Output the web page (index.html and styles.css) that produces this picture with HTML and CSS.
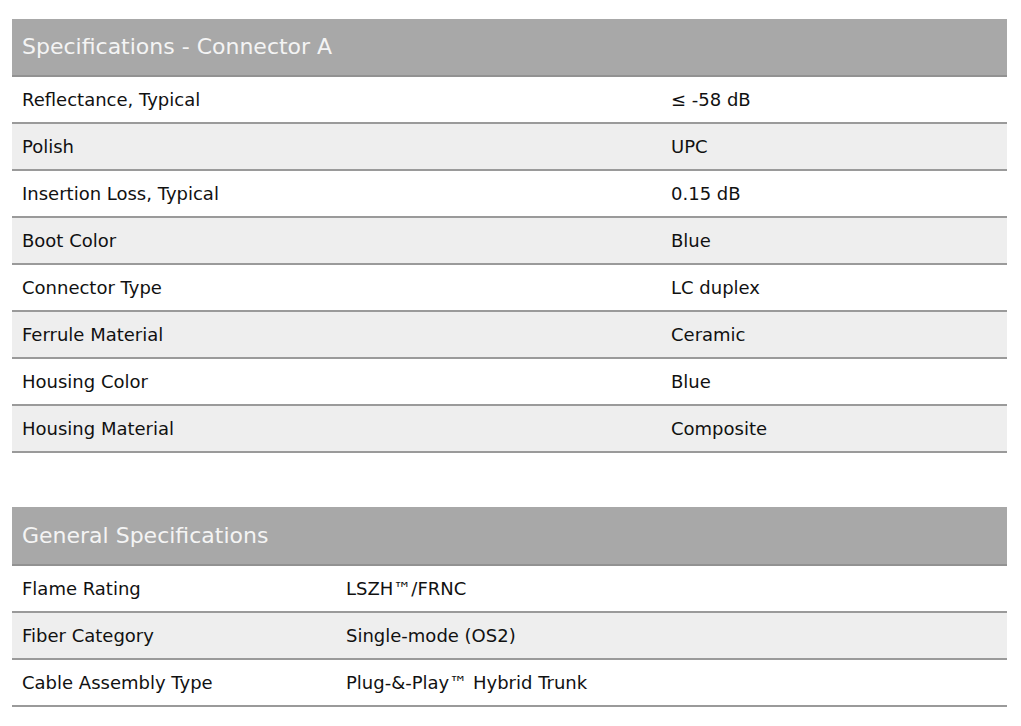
FILE: index.html
```html
<!DOCTYPE html>
<html>
<head>
<meta charset="utf-8">
<link rel="stylesheet" href="styles.css">
</head>
<body>
<div class="page">
  <section class="spec spec-a">
    <div class="spec-head">Specifications - Connector A</div>
    <div class="row"><div class="k">Reflectance, Typical</div><div class="v">≤ -58 dB</div></div>
    <div class="row alt"><div class="k">Polish</div><div class="v">UPC</div></div>
    <div class="row"><div class="k">Insertion Loss, Typical</div><div class="v">0.15 dB</div></div>
    <div class="row alt"><div class="k">Boot Color</div><div class="v">Blue</div></div>
    <div class="row"><div class="k">Connector Type</div><div class="v">LC duplex</div></div>
    <div class="row alt"><div class="k">Ferrule Material</div><div class="v">Ceramic</div></div>
    <div class="row"><div class="k">Housing Color</div><div class="v">Blue</div></div>
    <div class="row alt"><div class="k">Housing Material</div><div class="v">Composite</div></div>
  </section>
  <section class="spec spec-g">
    <div class="spec-head">General Specifications</div>
    <div class="row"><div class="k">Flame Rating</div><div class="v">LSZH™/FRNC</div></div>
    <div class="row alt"><div class="k">Fiber Category</div><div class="v">Single-mode (OS2)</div></div>
    <div class="row"><div class="k">Cable Assembly Type</div><div class="v">Plug-&amp;-Play™ Hybrid Trunk</div></div>
  </section>
</div>
</body>
</html>
```
FILE: styles.css
```css
html, body {
  margin: 0;
  padding: 0;
  background: #ffffff;
}
body {
  font-family: "DejaVu Sans", "Liberation Sans", sans-serif;
  color: #111111;
}
.page {
  padding: 19px 14px 0 12px;
  display: flex;
  flex-direction: column;
  gap: 54px;
}
.spec {
  display: flex;
  flex-direction: column;
}
.spec-head {
  background: #a8a8a8;
  color: #f4f4f4;
  font-size: 22px;
  height: 56px;
  line-height: 56px;
  padding-left: 10px;
  border-bottom: 2px solid #929292;
}
.spec-g .spec-head {
  height: 57px;
  line-height: 57px;
}
.row {
  display: grid;
  height: 45px;
  align-items: center;
  border-bottom: 2px solid #9a9a9a;
  font-size: 18px;
}
.row.alt {
  background: #eeeeee;
}
.spec-a .row {
  grid-template-columns: 649px 1fr;
}
.spec-g .row {
  grid-template-columns: 324px 1fr;
}
.k, .v {
  padding-left: 10px;
}
```
